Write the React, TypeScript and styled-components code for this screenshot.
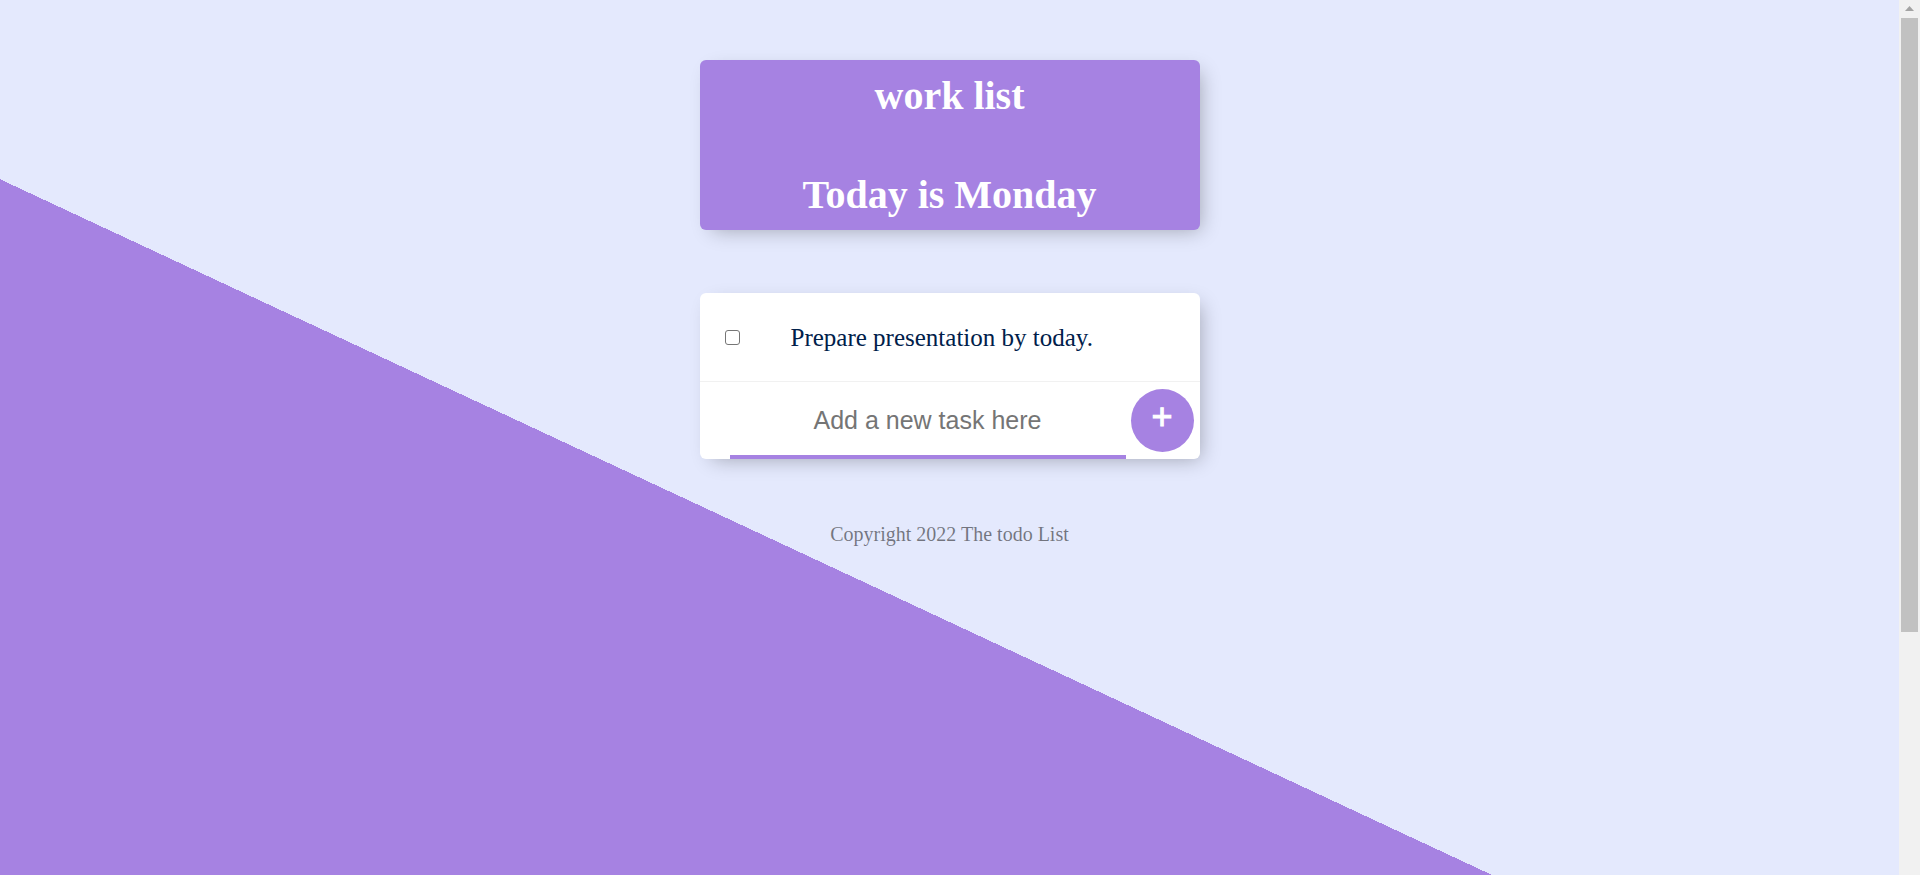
import React, { useState } from "react";
import styled, { createGlobalStyle } from "styled-components";

const purple = "#a682e2";
const lavender = "#e4e9fd";
const serif = `"Liberation Serif", "Times New Roman", serif`;
const sans = `"Liberation Sans", Arial, sans-serif`;

const GlobalStyle = createGlobalStyle`
  *, *::before, *::after { box-sizing: border-box; }
  body { margin: 0; font-family: ${serif}; background: ${lavender}; }
`;

const Shell = styled.div`
  display: flex;
  min-height: 100vh;
`;

const Page = styled.div`
  flex: 1;
  min-width: 0;
  display: flex;
  flex-direction: column;
  align-items: center;
  padding: 60px 0;
  background: linear-gradient(25deg, ${purple} 50%, ${lavender} 50%) 0 0 / 100% 1244px no-repeat;
`;

const Box = styled.section<{ $fill: string }>`
  width: 100%;
  max-width: 500px;
  border-radius: 6px;
  background: ${(p) => p.$fill};
  box-shadow: 6px 6px 19px -6px rgba(0, 0, 0, 0.3);
`;

const Heading = styled(Box)`
  display: flex;
  flex-direction: column;
  gap: 53px;
  padding: 13px 12px 12px;
  margin-bottom: 63px;
  text-align: center;
`;

const Title = styled.h1`
  margin: 0;
  color: #fff;
  font-size: 40px;
  line-height: 46px;
`;

const Item = styled.div`
  display: flex;
  align-items: center;
  min-height: 89px;
  border-bottom: 1px solid #f1f1f1;
`;

const Check = styled.input`
  appearance: none;
  flex: none;
  width: 15px;
  height: 15px;
  margin: 0 26px 0 25px;
  border: 1px solid #767676;
  border-radius: 3px;
  background: #fff;
  &:checked { background: ${purple}; }
  &:checked + label { text-decoration: line-through; }
`;

const TaskText = styled.label`
  padding: 0 25px;
  color: #00204a;
  font-size: 25px;
  line-height: 29px;
`;

const AddForm = styled.form`
  display: flex;
  align-items: center;
  gap: 5px;
  padding: 0 6px 0 30px;
`;

const TaskInput = styled.input`
  flex: 1;
  min-width: 0;
  height: 77px;
  padding: 0;
  border: 0;
  outline: 0;
  background: transparent;
  box-shadow: inset 0 -4px 0 0 ${purple};
  text-align: center;
  font-family: ${sans};
  font-size: 25px;
  &::placeholder { color: #757575; }
`;

const AddButton = styled.button`
  flex: none;
  width: 63px;
  height: 63px;
  padding: 0 0 8px;
  border: 0;
  border-radius: 50%;
  background: ${purple};
  color: #fff;
  font-family: ${sans};
  font-size: 36px;
  line-height: 44px;
  -webkit-text-stroke: 1px #fff;
`;

const Footer = styled.footer`
  margin-top: 64px;
  color: rgba(0, 0, 0, 0.5);
  font-size: 20px;
  line-height: 23px;
`;

const ScrollTrack = styled.div`
  display: flex;
  flex-direction: column;
  align-items: center;
  width: 21px;
  background: #f1f1f1;
`;

const ScrollArrow = styled.svg`
  display: block;
  width: 21px;
  height: 18px;
`;

const ScrollThumb = styled.div`
  width: 17px;
  height: 614px;
  background: #c1c1c1;
`;

export default function App() {
  const [tasks, setTasks] = useState(["Prepare presentation by today."]);
  const [draft, setDraft] = useState("");

  const add = (e: React.FormEvent) => {
    e.preventDefault();
    if (draft.trim()) setTasks([...tasks, draft.trim()]);
    setDraft("");
  };

  return (
    <Shell>
      <GlobalStyle />
      <Page>
        <Heading $fill={purple}>
          <Title>work list</Title>
          <Title>Today is Monday</Title>
        </Heading>
        <Box $fill="#fff">
          {tasks.map((task, i) => (
            <Item key={i}>
              <Check type="checkbox" id={`task-${i}`} />
              <TaskText htmlFor={`task-${i}`}>{task}</TaskText>
            </Item>
          ))}
          <AddForm onSubmit={add}>
            <TaskInput
              type="text"
              aria-label="New task"
              placeholder="Add a new task here"
              autoComplete="off"
              value={draft}
              onChange={(e) => setDraft(e.target.value)}
            />
            <AddButton type="submit">+</AddButton>
          </AddForm>
        </Box>
        <Footer>Copyright 2022 The todo List</Footer>
      </Page>
      <ScrollTrack aria-hidden="true">
        <ScrollArrow viewBox="0 0 21 18">
          <path d="M6 11L10.5 6L15 11Z" fill="#a3a3a3" />
        </ScrollArrow>
        <ScrollThumb />
      </ScrollTrack>
    </Shell>
  );
}
